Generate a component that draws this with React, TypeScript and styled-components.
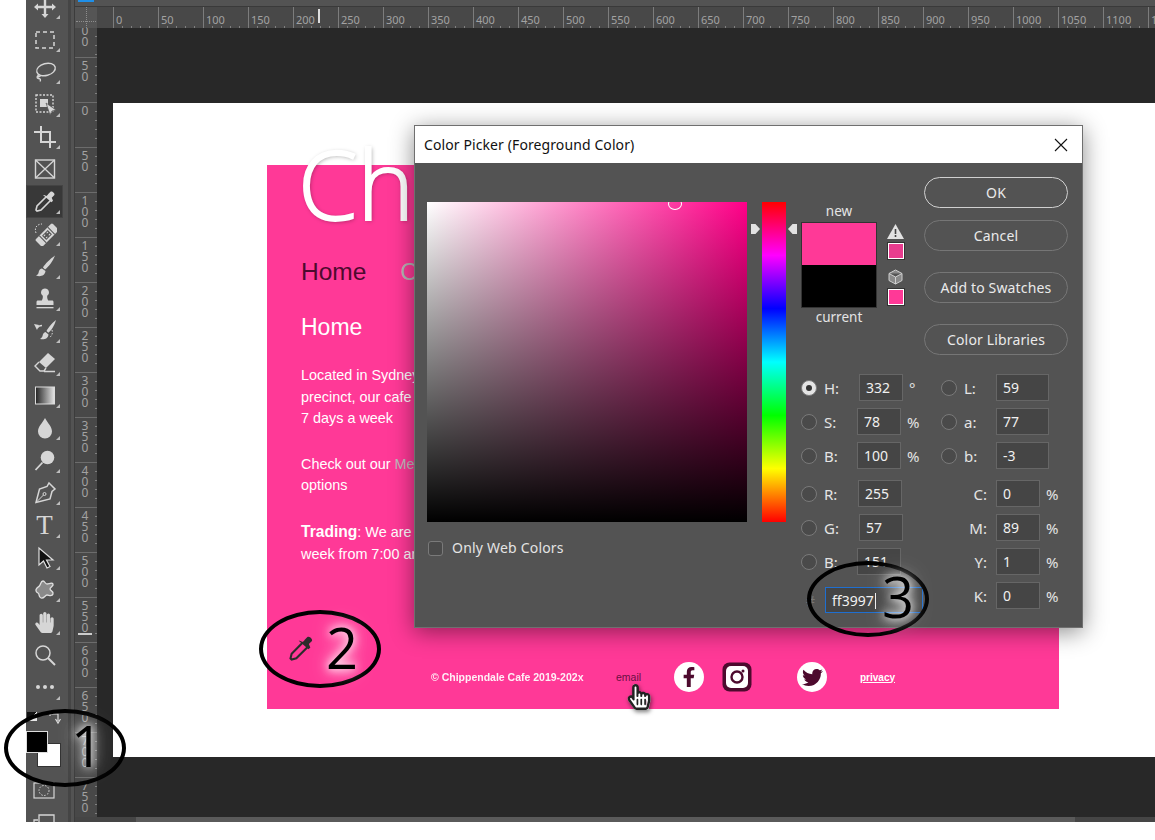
import React from 'react';
import styled, { createGlobalStyle } from 'styled-components';
import { FaFacebookF, FaHandPaper, FaHandPointer, FaRegHandPointer, FaTwitter } from 'react-icons/fa';

const GlobalStyle = createGlobalStyle`
  html, body { margin: 0; padding: 0; background: #fff; }
  * { box-sizing: border-box; }
`;

const PINK = '#ff3997';
const PLUM = '#4d0a2e';
const UI_FONT = '"Noto Sans", "Open Sans", sans-serif';

const Stage = styled.div`
  position: relative;
  width: 1155px;
  height: 840px;
  overflow: hidden;
  background: #fff;
`;

const Frame = styled.div`
  display: flex;
  margin-left: 26px;
  height: 822px;
  background: #535353;
  overflow: hidden;
`;

/* tool column */
const Toolbar = styled.div`
  width: 41px;
  flex: none;
  display: flex;
  flex-direction: column;
  overflow: hidden;
`;

const ToolList = styled.div`
  margin-top: -9px;
  display: flex;
  flex-direction: column;
`;

const Tool = styled.div<{ $active?: boolean; $flyout?: boolean }>`
  position: relative;
  height: 32.4px;
  width: 37px;
  flex: none;
  display: flex;
  align-items: center;
  justify-content: center;
  color: #d6d6d6;
  background: ${p => (p.$active ? '#383838' : 'transparent')};
  box-shadow: ${p => (p.$active ? 'inset 0 0 0 1px #444' : 'none')};
  svg { display: block; }
  &::after {
    content: '';
    display: ${p => (p.$flyout ? 'block' : 'none')};
    position: absolute;
    right: 3px;
    bottom: 4px;
    border-left: 4px solid transparent;
    border-bottom: 4px solid #bdbdbd;
  }
`;

const TypeGlyph = styled.span`
  font-family: "Liberation Serif", serif;
  font-size: 27px;
  line-height: 1;
  color: #d6d6d6;
`;

const ColorWell = styled.div`
  position: relative;
  height: 62px;
  margin-top: 7px;
  flex: none;
`;

const MiniDefault = styled.div`
  position: absolute;
  left: 1px;
  top: 1px;
  width: 10px;
  height: 9px;
  background: linear-gradient(135deg, #111 50%, #e8e8e8 50%);
`;

const SwapArrow = styled.svg`
  position: absolute;
  left: 23px;
  top: 1px;
`;

const BackSwatch = styled.div`
  position: absolute;
  left: 11px;
  top: 32px;
  width: 24px;
  height: 24px;
  background: #fff;
  border: 1px solid #333;
`;

const FrontSwatch = styled.div`
  position: absolute;
  left: 0;
  top: 20px;
  width: 22px;
  height: 22px;
  background: #000;
  border: 1px solid #ddd;
`;

const QuickMask = styled.svg`
  flex: none;
  margin: 9px 0 0 7px;
`;

const ScreenMode = styled.svg`
  flex: none;
  margin: 15px 0 0 7px;
`;

const Divider = styled.div`
  width: 8px;
  flex: none;
  background: linear-gradient(to right, #535353 0 1px, #454545 1px 4px, #535353 4px 7px, #3c3c3c 7px);
`;

/* document area */
const Workspace = styled.div`
  flex: 1;
  min-width: 0;
  display: flex;
  flex-direction: column;
`;

const TabStrip = styled.div`
  height: 7px;
  flex: none;
  border-bottom: 1px solid #3a3a3a;
`;

const ActiveTab = styled.div`
  width: 16px;
  height: 2px;
  margin-left: 3px;
  background: #1f8fe8;
`;

const RulerTop = styled.div`
  position: relative;
  height: 21px;
  flex: none;
  display: flex;
  background: #484848;
  overflow: hidden;
`;

const RulerCorner = styled.div`
  width: 38px;
  flex: none;
  position: relative;
  &::before {
    content: '';
    position: absolute;
    left: 1px;
    right: 17px;
    top: 14px;
    border-top: 1px dotted #8d8d8d;
  }
  &::after {
    content: '';
    position: absolute;
    left: 11px;
    top: 0;
    bottom: 0;
    border-left: 1px dotted #8d8d8d;
  }
  background: linear-gradient(to right, #555 0 22px, transparent 22px);
`;

const HTick = styled.div`
  position: relative;
  width: 45px;
  flex: none;
  border-left: 1px solid #7c7c7c;
  padding: 7px 0 0 2px;
  font: 11px/12px ${UI_FONT};
  color: #a2a2a2;
  background: repeating-linear-gradient(to right, transparent 0 8px, #808080 8px 9px) left bottom / 100% 2px no-repeat;
`;

const RulerMarker = styled.div`
  position: absolute;
  left: 243px;
  top: 2px;
  width: 2px;
  height: 14px;
  background: #ddd;
`;

const WorkRow = styled.div`
  flex: 1;
  min-height: 0;
  display: flex;
`;

const RulerSide = styled.div`
  position: relative;
  width: 22px;
  flex: none;
  display: flex;
  flex-direction: column;
  background: #484848;
  overflow: hidden;
`;

const VTick = styled.div<{ $first?: boolean }>`
  height: ${p => (p.$first ? 29 : 45)}px;
  flex: none;
  border-top: ${p => (p.$first ? 'none' : '1px solid #6c6c6c')};
  padding-top: ${p => (p.$first ? 0 : 2)}px;
  text-align: center;
  overflow: hidden;
  background: repeating-linear-gradient(to bottom, transparent 0 8px, #808080 8px 9px) right top / 2px 100% no-repeat;
`;

const VDigit = styled.div<{ $clip?: boolean }>`
  font: 12px/11px ${UI_FONT};
  color: #a2a2a2;
  padding-right: 2px;
  margin-top: ${p => (p.$clip ? -3 : 0)}px;
`;

const SideMarker = styled.div`
  position: absolute;
  left: 3px;
  top: 605px;
  width: 14px;
  height: 2px;
  background: #ccc;
`;

const Pasteboard = styled.div`
  flex: 1;
  min-width: 0;
  background: #282828;
  padding: 75px 0 0 16px;
`;

const Canvas = styled.div`
  height: 654px;
  background: #fff;
  padding: 62px 0 0 154px;
`;

const ScrollTrack = styled.div`
  height: 5px;
  flex: none;
  background: linear-gradient(to right, #454545 0 61px, #5a5a5a 61px 1000px, #454545 1000px);
`;

/* the web page being edited */
const WebPage = styled.div`
  position: relative;
  width: 792px;
  height: 544px;
  background: ${PINK};
  padding-left: 34px;
  display: flex;
  flex-direction: column;
  font-family: "Liberation Sans", Arial, sans-serif;
  color: #fff;
  white-space: nowrap;
`;

const SiteTitle = styled.div`
  margin: -46px 0 0 -3px;
  height: 110px;
  font: 300 96px/128px "Open Sans", sans-serif;
  -webkit-text-stroke: 1.8px #fff;
  color: #fff;
  text-shadow: 1px 1px 4px rgba(0, 0, 0, 0.35);
`;

const SiteNav = styled.div`
  display: flex;
  gap: 34px;
  margin-top: 28px;
  font-size: 24.5px;
  line-height: 30px;
`;

const NavLink = styled.span<{ $current?: boolean }>`
  color: ${p => (p.$current ? PLUM : '#b4b4b4')};
`;

const PageHeading = styled.div`
  margin-top: 27px;
  font-size: 23px;
  line-height: 26px;
`;

const Para = styled.p`
  margin: 24px 0 0;
  font-size: 14.4px;
  line-height: 21.6px;
  &:first-of-type { margin-top: 25px; }
  b { font-size: 15.6px; }
`;

const MutedLink = styled.span`
  color: #bcbcbc;
`;

const SiteFooter = styled.div`
  margin-top: auto;
  margin-left: 130px;
  height: 30px;
  margin-bottom: 17px;
  display: grid;
  grid-template-columns: 185px 58px 48px 75px 63px auto;
  align-items: center;
  font-size: 10.5px;
`;

const Copyright = styled.span`
  font-weight: 700;
  color: #fff;
  opacity: 0.92;
`;

const EmailLink = styled.span`
  position: relative;
  color: #6a0f42;
`;

const PrivacyLink = styled.span`
  font-weight: 700;
  font-size: 10px;
  color: #fff;
  text-decoration: underline;
`;

const SocialDisc = styled.span`
  width: 30px;
  height: 30px;
  border-radius: 50%;
  background: #fff;
  color: ${PLUM};
  display: flex;
  align-items: center;
  justify-content: center;
`;

const CursorHand = styled.span`
  position: absolute;
  left: 10px;
  top: 13px;
  width: 24px;
  height: 28px;
  filter: drop-shadow(1px 2px 2px rgba(0, 0, 0, 0.5));
  svg { position: absolute; left: 0; top: 0; }
`;

const PageDropper = styled.svg`
  position: absolute;
  left: 20px;
  top: 470px;
`;

/* color picker window */
const PickerWindow = styled.div`
  position: absolute;
  left: 414px;
  top: 125px;
  width: 669px;
  height: 503px;
  border: 1px solid #6f6f6f;
  background: #535353;
  box-shadow: 0 4px 22px rgba(0, 0, 0, 0.45);
  font-family: ${UI_FONT};
  display: flex;
  flex-direction: column;
`;

const TitleBar = styled.div`
  height: 37px;
  flex: none;
  background: #fff;
  display: flex;
  align-items: center;
  justify-content: space-between;
  padding: 0 14px 0 9px;
  font-size: 14px;
  letter-spacing: 0.1px;
  color: #111;
`;

const PickerBody = styled.div`
  flex: 1;
  display: flex;
  padding-left: 12px;
`;

const FieldColumn = styled.div`
  width: 320px;
  flex: none;
  padding-top: 39px;
`;

const SatValField = styled.div`
  position: relative;
  width: 320px;
  height: 320px;
  overflow: hidden;
  background:
    linear-gradient(to top, #000, rgba(0, 0, 0, 0)),
    linear-gradient(to right, #fff, #ff0088);
`;

const FieldMarker = styled.div`
  position: absolute;
  left: 241px;
  top: -4px;
  width: 14px;
  height: 12px;
  border: 1px solid #fff;
  border-radius: 50%;
`;

const WebOnlyRow = styled.label`
  display: flex;
  align-items: center;
  gap: 9px;
  margin: 17px 0 0 1px;
  font-size: 14px;
  line-height: 18px;
  letter-spacing: 0.2px;
  color: #e4e4e4;
`;

const CheckBox = styled.span`
  width: 15px;
  height: 15px;
  border: 1px solid #7a7a7a;
  border-radius: 3px;
  background: #4a4a4a;
`;

const HueColumn = styled.div`
  position: relative;
  width: 24px;
  height: 320px;
  flex: none;
  margin: 39px 0 0 15px;
  background: linear-gradient(#f00, #f0f 16.7%, #00f 33.3%, #0ff 50%, #0f0 66.7%, #ff0 83.3%, #f00);
`;

const HueHandle = styled.div<{ $side: 'left' | 'right' }>`
  position: absolute;
  top: 22px;
  ${p => (p.$side === 'left' ? 'left: -11px;' : 'right: -11px;')}
  width: 9px;
  height: 10px;
  background: #e2e2e2;
  clip-path: ${p =>
    p.$side === 'left'
      ? 'polygon(0 0, 50% 0, 100% 50%, 50% 100%, 0 100%)'
      : 'polygon(100% 0, 50% 0, 0 50%, 50% 100%, 100% 100%)'};
`;

const ControlsColumn = styled.div`
  margin-left: 15px;
  padding-top: 14px;
  width: 267px;
  flex: none;
  display: flex;
  flex-direction: column;
`;

const TopControls = styled.div`
  display: flex;
  height: 177px;
`;

const PreviewColumn = styled.div`
  width: 123px;
  flex: none;
  padding-top: 25px;
  display: flex;
  flex-direction: column;
`;

const PreviewLabel = styled.div`
  width: 76px;
  text-align: center;
  font-size: 13.5px;
  line-height: 18px;
  color: #e4e4e4;
`;

const PreviewRow = styled.div`
  display: flex;
  gap: 10px;
  height: 86px;
  margin-top: 2px;
`;

const PreviewBox = styled.div`
  width: 76px;
  height: 86px;
  border: 1px solid #333;
  display: flex;
  flex-direction: column;
`;

const PreviewNew = styled.div`
  flex: 1;
  background: ${PINK};
`;

const PreviewCurrent = styled.div`
  flex: 1;
  background: #000;
`;

const GamutColumn = styled.div`
  display: flex;
  flex-direction: column;
  align-items: center;
  width: 17px;
  padding-top: 2px;
  svg { flex: none; }
`;

const GamutSwatch = styled.div<{ $color: string }>`
  width: 16px;
  height: 16px;
  flex: none;
  background: ${p => p.$color};
  border: 1px solid #fff;
  outline: 1px solid #333;
  margin: 4px 0 10px;
`;

const ButtonColumn = styled.div`
  width: 144px;
  flex: none;
  display: flex;
  flex-direction: column;
`;

const PickerButton = styled.div<{ $primary?: boolean; $gap?: number }>`
  height: 31px;
  flex: none;
  margin-top: ${p => p.$gap ?? 0}px;
  border: 1px solid ${p => (p.$primary ? '#d0d0d0' : '#767676')};
  border-radius: 16px;
  display: flex;
  align-items: center;
  justify-content: center;
  font-size: 14px;
  letter-spacing: 0.15px;
  color: #eaeaea;
`;

const ValuesArea = styled.div`
  margin-top: 20px;
  display: grid;
  grid-template-columns: 140px 1fr;
`;

const ValueColumn = styled.div`
  display: flex;
  flex-direction: column;
  gap: 11px;
`;

const ValueGroup = styled.div`
  display: flex;
  flex-direction: column;
  gap: 7px;
`;

const ValueRow = styled.div`
  display: flex;
  align-items: center;
  height: 27px;
  font-size: 14px;
  color: #e4e4e4;
`;

const Radio = styled.span<{ $on?: boolean }>`
  position: relative;
  width: 16px;
  height: 16px;
  flex: none;
  margin-right: 7px;
  border-radius: 50%;
  border: 1px solid #7a7a7a;
  background: ${p => (p.$on ? '#e4e4e4' : '#4a4a4a')};
  &::after {
    content: '';
    display: ${p => (p.$on ? 'block' : 'none')};
    position: absolute;
    left: 4px;
    top: 4px;
    width: 6px;
    height: 6px;
    border-radius: 50%;
    background: #333;
  }
`;

const ValueLabel = styled.span<{ $width: number; $right?: boolean }>`
  width: ${p => p.$width}px;
  flex: none;
  font-size: 15px;
  text-align: ${p => (p.$right ? 'right' : 'left')};
  padding-right: ${p => (p.$right ? 9 : 0)}px;
`;

const ValueInput = styled.div<{ $width?: number; $focus?: boolean }>`
  width: ${p => p.$width ?? 44}px;
  height: ${p => (p.$focus ? 26 : 27)}px;
  flex: none;
  margin-top: ${p => (p.$focus ? 9 : 0)}px;
  padding-left: 6px;
  line-height: 26px;
  background: #454545;
  border: 1px solid ${p => (p.$focus ? '#1f6fd0' : '#666')};
  color: #f0f0f0;
`;

const CaretBar = styled.span`
  display: inline-block;
  width: 1px;
  height: 16px;
  margin-left: 1px;
  vertical-align: -3px;
  background: #eee;
`;

const Unit = styled.span`
  margin-left: 6px;
  font-size: 15px;
`;

const HashLabel = styled.span`
  width: 24px;
  flex: none;
  padding: 9px 0 0 5px;
  color: #777;
`;

/* teaching annotations drawn on the screenshot */
const Callout = styled.div<{ $x: number; $y: number; $w: number; $h: number }>`
  position: absolute;
  left: ${p => p.$x}px;
  top: ${p => p.$y}px;
  width: ${p => p.$w}px;
  height: ${p => p.$h}px;
  border: 4px solid #000;
  border-radius: 50%;
  pointer-events: none;
`;

const CalloutNumber = styled.span<{ $x: number; $y: number }>`
  position: absolute;
  left: ${p => p.$x}px;
  top: ${p => p.$y}px;
  font: 400 56px/60px "Open Sans", sans-serif;
  color: #000;
  text-shadow: 0 0 8px rgba(255, 255, 255, 0.9), 0 0 14px rgba(255, 255, 255, 0.8), 0 0 22px rgba(255, 255, 255, 0.7);
`;

const ICON = { width: 24, height: 24, viewBox: '0 0 24 24' };

const DROPPER_BODY = 'M13.500 6.500l-9.500 9.500-1 4 1 1 4-1 9.500-9.500';
const DROPPER_BULB = 'M11 5l2.500 1 1.500-1.500 0-.2 2.500-2.500c1.500-1.500 5.200 2 3.700 3.500l-2.500 2.500 1.300 3-1.500 1.500-8.500-7.300z';

const Dropper = () => (
  <svg {...ICON}>
    <path d={DROPPER_BODY} fill="none" stroke="currentColor" strokeWidth="1.600" />
    <path d={DROPPER_BULB} fill="currentColor" />
  </svg>
);

const tools: { key: string; flyout?: boolean; active?: boolean; node: React.ReactNode }[] = [
  { key: 'move', flyout: true, node: <svg {...ICON}><path fill="currentColor" d="M12 1l3.500 4h-2.300v5.800H19V8.500l4 3.500-4 3.500v-2.300h-5.800V19h2.300L12 23l-3.500-4h2.300v-5.800H5v2.300L1 12l4-3.500v2.300h5.800V5H8.500z" /></svg> },
  { key: 'marquee', flyout: true, node: <svg {...ICON}><rect x="3" y="4" width="18" height="16" fill="none" stroke="currentColor" strokeWidth="1.500" strokeDasharray="4 3" /></svg> },
  { key: 'lasso', flyout: true, node: <svg {...ICON}><ellipse cx="13" cy="9.500" rx="9.500" ry="6" transform="rotate(-15 13 9.500)" fill="none" stroke="currentColor" strokeWidth="1.400" /><path d="M6 15c-2.500 1-2.500 3-.5 3.500s2.500 1 1.500 3M4 17c2 0 3.500 0 3.500-2" fill="none" stroke="currentColor" strokeWidth="1.300" /></svg> },
  { key: 'select', flyout: true, node: <svg {...ICON}><rect x="3" y="3" width="17" height="17" fill="none" stroke="currentColor" strokeWidth="1.400" strokeDasharray="2 1.500" /><rect x="7" y="7" width="8" height="8" fill="currentColor" /><path d="M13 11l10 7-4 1-2 4z" fill="currentColor" stroke="#535353" strokeWidth=".7" /></svg> },
  { key: 'crop', flyout: true, node: <svg {...ICON}><path d="M8 1v16h15M1 7h16v16" fill="none" stroke="currentColor" strokeWidth="2" /></svg> },
  { key: 'frame', node: <svg {...ICON}><rect x="2.500" y="3" width="19" height="18" fill="none" stroke="currentColor" strokeWidth="1.400" /><path d="M2.500 3l19 18M21.500 3l-19 18" stroke="currentColor" strokeWidth="1.300" /></svg> },
  { key: 'dropper', flyout: true, active: true, node: <Dropper /> },
  { key: 'heal', flyout: true, node: <svg {...ICON}><g transform="rotate(-45 14 13)"><rect x="2" y="8" width="24" height="10" rx="1.500" fill="currentColor" /><path d="M8 8v10M20 8v10" stroke="#535353" /><rect x="10" y="10" width="8" height="6" fill="#535353" /><path d="M11 11.500h2M15 11.500h2M11 14.500h2M15 14.500h2" stroke="#ddd" /></g><path d="M3 11C1 6 4 2 9 2" fill="none" stroke="currentColor" strokeDasharray="1.500 1.500" /></svg> },
  { key: 'brush', flyout: true, node: <svg {...ICON}><path fill="currentColor" d="M22 1.500C17 5 12 10 10 13.500l2 2C15.500 13 20 7 22 1.500zM9 14.500c-3 .5-3 3-3.500 4.500-.3 1-1.200 2-2.500 2.500 4 1.500 9 .5 9.500-4.500z" /></svg> },
  { key: 'stamp', flyout: true, node: <svg {...ICON}><path fill="currentColor" d="M12 1.500a4 4 0 00-2.200 7.300c.2 2-.3 3.500-1 4.700H5c-1 0-1.500.7-1.500 1.500V18h17v-3c0-.8-.5-1.500-1.500-1.500h-3.800c-.7-1.200-1.200-2.700-1-4.700A4 4 0 0012 1.500z" /><rect x="3.500" y="20" width="17" height="1.300" fill="currentColor" /></svg> },
  { key: 'history', flyout: true, node: <svg {...ICON}><path fill="currentColor" d="M23 1C19 4 15 9 13.500 12l1.800 1.800C18.500 11.500 21.500 6.500 23 1zM12.500 13c-2.500.5-2.500 2.500-3 4-.3 1-1 2-2.500 3 4 1 8 0 8.500-4.500z" /><path d="M9 6.500c-2 0-4 1-5 2.500" fill="none" stroke="currentColor" strokeWidth="1.500" /><path d="M1 5l5 1-2 5z" fill="currentColor" /><path d="M19 11c1 3 0 6-3 8" fill="none" stroke="currentColor" strokeDasharray="1.500 1.500" /></svg> },
  { key: 'eraser', flyout: true, node: <svg {...ICON}><path d="M15 2l7 6-9 9-7-6z" fill="currentColor" /><path d="M6 11l-4 4 5 5h4l2-3M11 20.500h11" fill="none" stroke="currentColor" strokeWidth="1.400" /></svg> },
  { key: 'gradient', flyout: true, node: <svg {...ICON}><defs><linearGradient id="toolGradient"><stop offset="0" stopColor="#222" /><stop offset="1" stopColor="#e6e6e6" /></linearGradient></defs><rect x="2.500" y="3" width="19" height="17" fill="url(#toolGradient)" stroke="#dcdcdc" /></svg> },
  { key: 'blur', flyout: true, node: <svg {...ICON}><path fill="currentColor" d="M12 2c2.500 5 7 8.500 7 13.500a7 7 0 01-14 0C5 10.500 9.500 7 12 2z" /></svg> },
  { key: 'dodge', flyout: true, node: <svg {...ICON}><circle cx="14.500" cy="8.500" r="6.800" fill="currentColor" /><path d="M9.500 13.500L2.500 21" stroke="currentColor" strokeWidth="1.800" /></svg> },
  { key: 'pen', flyout: true, node: <svg {...ICON}><path d="M16 2l6 6-3 2.500-2 7.500L3 21.500 6.500 8l7.500-2.500z" fill="none" stroke="currentColor" strokeWidth="1.500" /><path d="M3.500 21l7-7" stroke="currentColor" /><circle cx="11.500" cy="13" r="1.500" fill="none" stroke="currentColor" /></svg> },
  { key: 'type', flyout: true, node: <TypeGlyph>T</TypeGlyph> },
  { key: 'path', flyout: true, node: <svg {...ICON}><path d="M6 2v17l4.500-4 3.500 7 3-1.500-3.500-6.500H20z" fill="#111" stroke="#e0e0e0" strokeWidth="1.200" /></svg> },
  { key: 'shape', flyout: true, node: <svg {...ICON}><path d="M10 3c2 0 2 3 4 3s5-2 6 0-3 3-3 5 4 2 3 5-4 1-6 1-3 4-6 3-1-4-3-5-3-3-1-5 2-1 3-3 1-4 3-4z" fill="#8a8a8a" stroke="#e0e0e0" strokeWidth="1.300" /></svg> },
  { key: 'hand', flyout: true, node: <FaHandPaper size={21} /> },
  { key: 'zoom', node: <svg {...ICON}><circle cx="10" cy="10" r="7" fill="none" stroke="currentColor" strokeWidth="1.500" /><path d="M15 15l7 7" stroke="currentColor" strokeWidth="2" /></svg> },
  { key: 'more', flyout: true, node: <svg {...ICON}><circle cx="5" cy="12" r="2" fill="currentColor" /><circle cx="12" cy="12" r="2" fill="currentColor" /><circle cx="19" cy="12" r="2" fill="currentColor" /></svg> },
];

const rulerTop = Array.from({ length: 24 }, (_, i) => String(i * 50));
const rulerSide = ['00', '50', '0', '50', '100', '150', '200', '250', '300', '350', '400', '450', '500', '550', '600', '650', '700', '750'];

const InstagramBadge = () => (
  <svg width="30" height="30" viewBox="0 0 30 30">
    <rect x="0.500" y="0.500" width="29" height="29" rx="7" fill={PLUM} />
    <rect x="4" y="4" width="22" height="22" rx="5" fill="#fff" />
    <circle cx="15" cy="15" r="5.500" fill="none" stroke={PLUM} strokeWidth="2.400" />
    <circle cx="21" cy="9" r="1.500" fill={PLUM} />
  </svg>
);

type FieldProps = { label: string; value: string; labelWidth: number; on?: boolean; unit?: string; inputWidth?: number };

const RadioField = ({ label, value, labelWidth, on, unit, inputWidth }: FieldProps) => (
  <ValueRow>
    <Radio $on={on} />
    <ValueLabel $width={labelWidth}>{label}</ValueLabel>
    <ValueInput $width={inputWidth}>{value}</ValueInput>
    {unit && <Unit>{unit}</Unit>}
  </ValueRow>
);

const InkField = ({ label, value }: { label: string; value: string }) => (
  <ValueRow>
    <ValueLabel $width={55} $right>{label}</ValueLabel>
    <ValueInput>{value}</ValueInput>
    <Unit>%</Unit>
  </ValueRow>
);

export default function App() {
  return (
    <Stage>
      <GlobalStyle />
      <Frame>
        <Toolbar>
          <ToolList>
            {tools.map(t => (
              <Tool key={t.key} $flyout={t.flyout} $active={t.active}>{t.node}</Tool>
            ))}
          </ToolList>
          <ColorWell>
            <MiniDefault />
            <SwapArrow width="12" height="13" viewBox="0 0 12 13">
              <path d="M1 2h8v7M6.500 7l2.500 4 2.500-4M1 0v4" fill="none" stroke="#ddd" strokeWidth="1.200" />
            </SwapArrow>
            <BackSwatch />
            <FrontSwatch />
          </ColorWell>
          <QuickMask width="22" height="17" viewBox="0 0 22 17">
            <rect x="1" y="1" width="20" height="15" fill="none" stroke="#d6d6d6" strokeWidth="1.200" />
            <circle cx="11" cy="8.500" r="5" fill="none" stroke="#d6d6d6" strokeDasharray="1.500 1.500" />
          </QuickMask>
          <ScreenMode width="22" height="14" viewBox="0 0 22 14">
            <path d="M1 14V6h4M6 14V1h15v13" fill="none" stroke="#d6d6d6" strokeWidth="1.300" />
          </ScreenMode>
        </Toolbar>
        <Divider />
        <Workspace>
          <TabStrip><ActiveTab /></TabStrip>
          <RulerTop>
            <RulerCorner />
            {rulerTop.map(n => <HTick key={n}>{n}</HTick>)}
            <RulerMarker />
          </RulerTop>
          <WorkRow>
            <RulerSide>
              {rulerSide.map((n, i) => (
                <VTick key={i} $first={i === 0}>
                  {n.split('').map((d, j) => <VDigit key={j} $clip={i === 0 && j === 0}>{d}</VDigit>)}
                </VTick>
              ))}
              <SideMarker />
            </RulerSide>
            <Pasteboard>
              <Canvas>
                <WebPage>
                  <SiteTitle>Ch</SiteTitle>
                  <SiteNav>
                    <NavLink $current>Home</NavLink>
                    <NavLink>C</NavLink>
                  </SiteNav>
                  <PageHeading>Home</PageHeading>
                  <Para>Located in Sydney<br />precinct, our cafe<br />7 days a week</Para>
                  <Para>Check out our <MutedLink>Me</MutedLink><br />options</Para>
                  <Para><b>Trading</b>: We are<br />week from 7:00 am</Para>
                  <SiteFooter>
                    <Copyright>© Chippendale Cafe 2019-202x</Copyright>
                    <EmailLink>
                      email
                      <CursorHand>
                        <FaHandPointer size={26} color="#fff" />
                        <FaRegHandPointer size={26} color="#222" />
                      </CursorHand>
                    </EmailLink>
                    <SocialDisc><FaFacebookF size={20} /></SocialDisc>
                    <InstagramBadge />
                    <SocialDisc><FaTwitter size={21} /></SocialDisc>
                    <PrivacyLink>privacy</PrivacyLink>
                  </SiteFooter>
                  <PageDropper width="28" height="28" viewBox="0 0 24 24">
                    <path d={DROPPER_BODY} fill="none" stroke="#2b2b2b" strokeWidth="1.800" />
                    <path d={DROPPER_BULB} fill="#2b2b2b" />
                  </PageDropper>
                </WebPage>
              </Canvas>
            </Pasteboard>
          </WorkRow>
          <ScrollTrack />
        </Workspace>
      </Frame>

      <PickerWindow>
        <TitleBar>
          Color Picker (Foreground Color)
          <svg width="14" height="14" viewBox="0 0 14 14">
            <path d="M1 1l12 12M13 1L1 13" stroke="#111" strokeWidth="1.100" />
          </svg>
        </TitleBar>
        <PickerBody>
          <FieldColumn>
            <SatValField><FieldMarker /></SatValField>
            <WebOnlyRow><CheckBox />Only Web Colors</WebOnlyRow>
          </FieldColumn>
          <HueColumn>
            <HueHandle $side="left" />
            <HueHandle $side="right" />
          </HueColumn>
          <ControlsColumn>
            <TopControls>
              <PreviewColumn>
                <PreviewLabel>new</PreviewLabel>
                <PreviewRow>
                  <PreviewBox>
                    <PreviewNew />
                    <PreviewCurrent />
                  </PreviewBox>
                  <GamutColumn>
                    <svg width="17" height="15" viewBox="0 0 17 15">
                      <path d="M8.500 0L17 15H0z" fill="#e2e2e2" />
                      <path d="M7.700 5h1.600v5H7.700zM7.700 11h1.600v2H7.700z" fill="#444" />
                    </svg>
                    <GamutSwatch $color="#e83c8e" />
                    <svg width="15" height="16" viewBox="0 0 15 16">
                      <path d="M7.500 1L14 4.500v7L7.500 15 1 11.500v-7zM1 4.500L7.500 8 14 4.500M7.500 8v7" fill="#8a8a8a" stroke="#cfcfcf" strokeWidth="1" />
                    </svg>
                    <GamutSwatch $color={PINK} />
                  </GamutColumn>
                </PreviewRow>
                <PreviewLabel>current</PreviewLabel>
              </PreviewColumn>
              <ButtonColumn>
                <PickerButton $primary>OK</PickerButton>
                <PickerButton $gap={12}>Cancel</PickerButton>
                <PickerButton $gap={21}>Add to Swatches</PickerButton>
                <PickerButton $gap={21}>Color Libraries</PickerButton>
              </ButtonColumn>
            </TopControls>
            <ValuesArea>
              <ValueColumn>
                <ValueGroup>
                  <RadioField on label="H:" value="332" labelWidth={35} unit="°" />
                  <RadioField label="S:" value="78" labelWidth={33} unit="%" />
                  <RadioField label="B:" value="100" labelWidth={33} unit="%" />
                </ValueGroup>
                <ValueGroup>
                  <RadioField label="R:" value="255" labelWidth={34} />
                  <RadioField label="G:" value="57" labelWidth={35} />
                  <RadioField label="B:" value="151" labelWidth={33} />
                  <ValueRow>
                    <HashLabel>#</HashLabel>
                    <ValueInput $width={98} $focus>ff3997<CaretBar /></ValueInput>
                  </ValueRow>
                </ValueGroup>
              </ValueColumn>
              <ValueColumn>
                <ValueGroup>
                  <RadioField label="L:" value="59" labelWidth={32} inputWidth={53} />
                  <RadioField label="a:" value="77" labelWidth={32} inputWidth={53} />
                  <RadioField label="b:" value="-3" labelWidth={32} inputWidth={53} />
                </ValueGroup>
                <ValueGroup>
                  <InkField label="C:" value="0" />
                  <InkField label="M:" value="89" />
                  <InkField label="Y:" value="1" />
                  <InkField label="K:" value="0" />
                </ValueGroup>
              </ValueColumn>
            </ValuesArea>
          </ControlsColumn>
        </PickerBody>
      </PickerWindow>

      <Callout $x={4} $y={709} $w={122} $h={78} />
      <CalloutNumber $x={71} $y={715}>1</CalloutNumber>
      <Callout $x={259} $y={610} $w={122} $h={78} />
      <CalloutNumber $x={326} $y={617}>2</CalloutNumber>
      <Callout $x={807} $y={561} $w={122} $h={76} />
      <CalloutNumber $x={882} $y={566}>3</CalloutNumber>
    </Stage>
  );
}
